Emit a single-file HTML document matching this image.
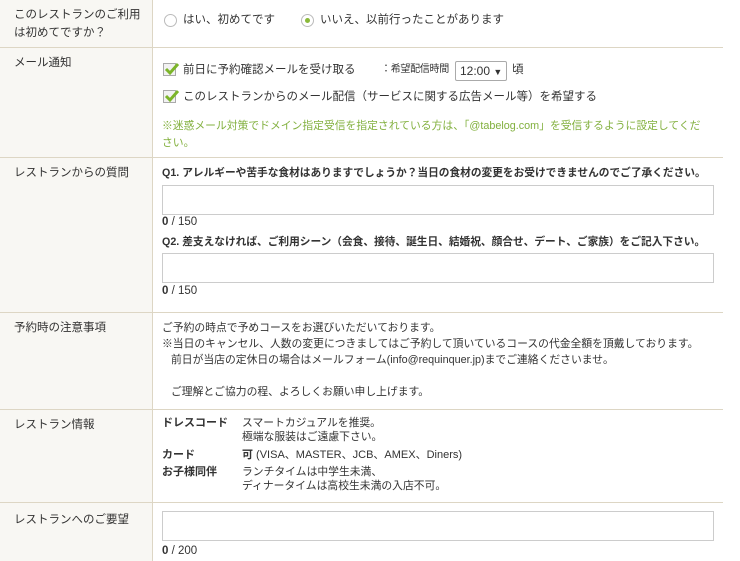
<!DOCTYPE html>
<html><head><meta charset="utf-8"><style>
*{margin:0;padding:0;box-sizing:border-box}
body{width:740px;height:561px;overflow:hidden;background:#fff;font-family:"Liberation Sans","Noto Sans CJK JP",sans-serif;font-size:11.5px;color:#333;position:relative}
.l{position:absolute;left:0;width:152px;background:#f8f7f3}
.vl{position:absolute;left:152px;top:0;width:1px;height:561px;background:#ddd6c4}
.hl{position:absolute;left:0;width:723px;height:1px;background:#ddd6c4}
.t{position:absolute;white-space:nowrap;line-height:16px}
.ta{position:absolute;left:162px;width:552px;height:30px;border:1px solid #ccc;background:#fff}
.cb{position:absolute;left:163px;width:13px;height:13px;border:1px solid #aaa;background:#f2f2f2}
.cb svg{position:absolute;left:0;top:-3px}
.rd{position:absolute;width:13px;height:13px;border:1px solid #bbb;border-radius:50%;background:#fff}
.g{color:#82b03e}
b{font-weight:bold}
</style></head><body>
<div class="l" style="top:0;height:561px"></div>
<div class="vl"></div>
<div class="hl" style="top:47px"></div>
<div class="hl" style="top:157px"></div>
<div class="hl" style="top:312px"></div>
<div class="hl" style="top:409px"></div>
<div class="hl" style="top:502px"></div>

<div class="t" style="left:14px;top:6px;line-height:18px">このレストランのご利用<br>は初めてですか？</div>
<div class="rd" style="left:164px;top:14px"></div>
<div class="t" style="left:183px;top:12px">はい、初めてです</div>
<div class="rd" style="left:301px;top:14px"><div style="position:absolute;left:3px;top:3px;width:5px;height:5px;border-radius:50%;background:#8ab93a"></div></div>
<div class="t" style="left:320px;top:12px">いいえ、以前行ったことがあります</div>

<div class="t" style="left:14px;top:55px">メール通知</div>
<div class="cb" style="top:63px"><svg width="16" height="16" viewBox="0 0 16 16"><path d="M2 8 L6 12 L14 3" stroke="#7cb52a" stroke-width="3" fill="none"/></svg></div>
<div class="t" style="left:183px;top:62px">前日に予約確認メールを受け取る</div>
<div class="t" style="left:381px;top:62px;font-size:10px;letter-spacing:-0.3px">：希望配信時間</div>
<div style="position:absolute;left:455px;top:61px;width:52px;height:20px;border:1px solid #aaa;border-radius:2px;background:#fff;font-size:12px;line-height:18px;padding-left:4px">12:00 <span style="font-size:9px">▼</span></div>
<div class="t" style="left:512px;top:62px">頃</div>
<div class="cb" style="top:90px"><svg width="16" height="16" viewBox="0 0 16 16"><path d="M2 8 L6 12 L14 3" stroke="#7cb52a" stroke-width="3" fill="none"/></svg></div>
<div class="t" style="left:183px;top:89px">このレストランからのメール配信（サービスに関する広告メール等）を希望する</div>
<div class="t g" style="left:162px;top:118px;line-height:17px;font-size:10.8px">※迷惑メール対策でドメイン指定受信を指定されている方は、「@tabelog.com」を受信するように設定してくだ<br>さい。</div>

<div class="t" style="left:14px;top:165px">レストランからの質問</div>
<div class="t" style="left:162px;top:165px;font-size:10.7px"><b>Q1. アレルギーや苦手な食材はありますでしょうか？当日の食材の変更をお受けできませんのでご了承ください。</b></div>
<div class="ta" style="top:185px"></div>
<div class="t" style="left:162px;top:214px"><b>0</b> / 150</div>
<div class="t" style="left:162px;top:234px;font-size:10.7px"><b>Q2. 差支えなければ、ご利用シーン（会食、接待、誕生日、結婚祝、顔合せ、デート、ご家族）をご記入下さい。</b></div>
<div class="ta" style="top:253px"></div>
<div class="t" style="left:162px;top:283px"><b>0</b> / 150</div>

<div class="t" style="left:14px;top:320px">予約時の注意事項</div>
<div class="t" style="left:162px;top:320px;font-size:10.8px">ご予約の時点で予めコースをお選びいただいております。<br>※当日のキャンセル、人数の変更につきましてはご予約して頂いているコースの代金全額を頂戴しております。<br>&nbsp;&nbsp;&nbsp;前日が当店の定休日の場合はメールフォーム(info@requinquer.jp)までご連絡くださいませ。<br><br>&nbsp;&nbsp;&nbsp;ご理解とご協力の程、よろしくお願い申し上げます。</div>

<div class="t" style="left:14px;top:417px">レストラン情報</div>
<div class="t" style="left:162px;top:416px;line-height:14px;font-size:11px"><b>ドレスコード</b></div>
<div class="t" style="left:242px;top:416px;line-height:14px;font-size:10.8px">スマートカジュアルを推奨。<br>極端な服装はご遠慮下さい。</div>
<div class="t" style="left:162px;top:447px;font-size:11px"><b>カード</b></div>
<div class="t" style="left:242px;top:447px;font-size:11px"><b>可</b> (VISA、MASTER、JCB、AMEX、Diners)</div>
<div class="t" style="left:162px;top:465px;line-height:14px;font-size:11px"><b>お子様同伴</b></div>
<div class="t" style="left:242px;top:465px;line-height:14px;font-size:10.8px">ランチタイムは中学生未満、<br>ディナータイムは高校生未満の入店不可。</div>

<div class="t" style="left:14px;top:512px">レストランへのご要望</div>
<div class="ta" style="top:511px"></div>
<div class="t" style="left:162px;top:543px"><b>0</b> / 200</div>
</body></html>
